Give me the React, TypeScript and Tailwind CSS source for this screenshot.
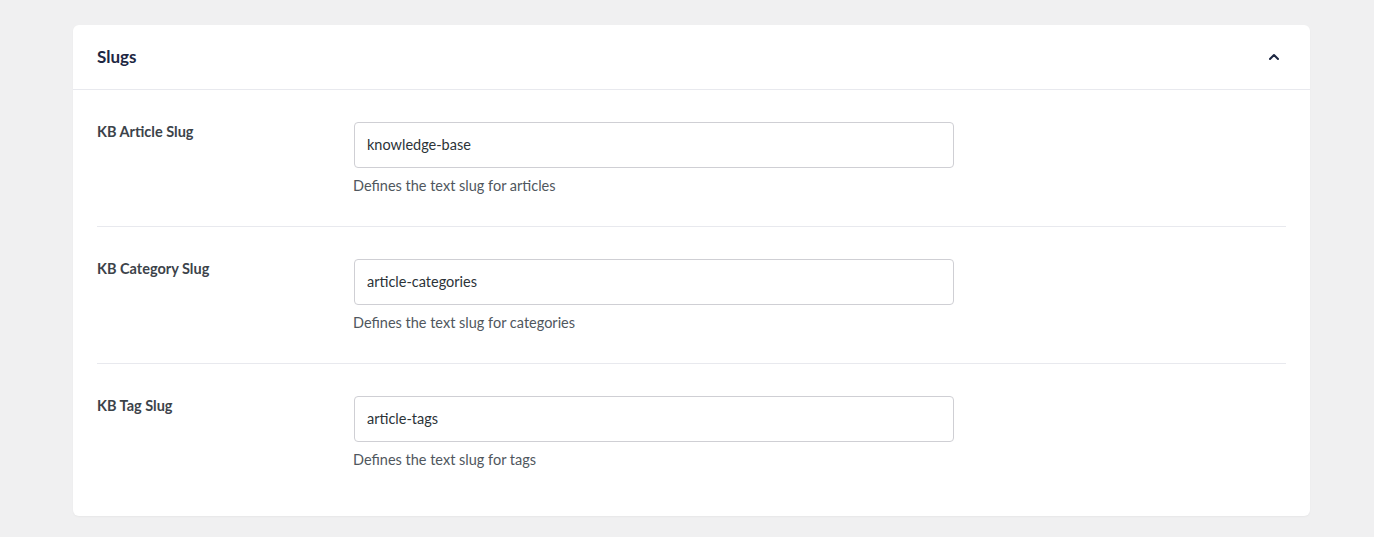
import { ChevronUp } from 'lucide-react';

const slugs = [
  { label: 'KB Article Slug', value: 'knowledge-base', help: 'Defines the text slug for articles' },
  { label: 'KB Category Slug', value: 'article-categories', help: 'Defines the text slug for categories' },
  { label: 'KB Tag Slug', value: 'article-tags', help: 'Defines the text slug for tags' },
];

function SlugRow({ label, value, help, last }: { label: string; value: string; help: string; last: boolean }) {
  return (
    <div className={`flex pt-8 ${last ? 'pb-[46px]' : 'pb-[30px] border-b border-[#e8e9ee]'}`}>
      <div className="w-[257px] shrink-0 text-[14.5px] leading-5 font-bold text-[#3c434a]">{label}</div>
      <div className="flex flex-col">
        <input
          className="w-[600px] h-[46px] rounded-[4px] border border-[#cfcfd4] bg-white px-3 pb-[2px] text-[14.5px] text-[#2c3338] outline-none"
          defaultValue={value}
        />
        <p className="mt-2 -ml-px text-[14.5px] leading-5 text-[#50575e]">{help}</p>
      </div>
    </div>
  );
}

export default function App() {
  return (
    <div className="min-h-[537px] bg-[#f0f0f1] pt-[25px] px-[73px] pb-[21px]" style={{ fontFamily: 'Lato, "Noto Sans", sans-serif' }}>
      <div className="w-[1237px] rounded-[6px] bg-white shadow-[0_1px_2px_rgba(0,0,0,0.04)]">
        <div className="flex h-[65px] items-center justify-between border-b border-[#e8e9ee] px-6">
          <h2 className="text-[17px] font-bold text-[#1d2742]">Slugs</h2>
          <ChevronUp size={16} strokeWidth={3} className="mr-1 text-[#1d2742]" />
        </div>
        <div className="px-6">
          {slugs.map((s, i) => (
            <SlugRow key={s.label} {...s} last={i === slugs.length - 1} />
          ))}
        </div>
      </div>
    </div>
  );
}
